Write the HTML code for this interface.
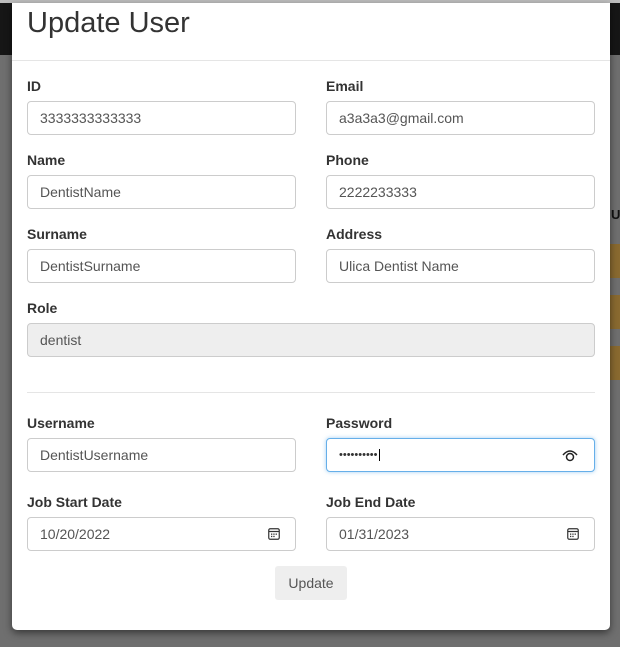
<!DOCTYPE html>
<html><head><style>
body{margin:0;width:620px;height:647px;overflow:hidden;background:#6f6f6f;font-family:"Liberation Sans",sans-serif;position:relative}
.top{position:absolute;left:0;top:0;width:620px;height:3px;background:#bdbdbd}
.dark{position:absolute;left:0;top:3px;width:620px;height:52px;background:#161616}
.modal{position:absolute;left:12px;top:3px;width:598px;height:627px;background:#fff;border-radius:0 0 5px 5px;box-shadow:0 3px 8px rgba(0,0,0,.5)}
h1{position:absolute;left:15px;top:4px;margin:0;font-weight:400;font-size:29px;color:#333}
.hr{position:absolute;left:0;width:598px;height:1px;background:#e5e5e5}
.lbl{position:absolute;font-size:14px;font-weight:bold;color:#333;margin-top:-1px}
.in{position:absolute;box-sizing:border-box;height:34px;border:1px solid #ccc;border-radius:4px;font-size:14px;color:#555;padding:8px 12px;background:#fff}
.btn{position:absolute;left:263px;top:563px;width:72px;height:34px;background:#eee;border-radius:3px;font-size:14px;color:#555;text-align:center;line-height:34px}
.side{position:absolute;background:#8a6a30}
</style></head><body>
<div class="top"></div><div class="dark"></div>
<div class="side" style="left:610px;top:244px;width:10px;height:34px"></div>
<div class="side" style="left:610px;top:295px;width:10px;height:34px"></div>
<div class="side" style="left:610px;top:346px;width:10px;height:34px"></div>
<div style="position:absolute;left:611px;top:207px;font-size:13px;font-weight:bold;color:#111">U</div>
<div class="modal">
<h1>Update User</h1>
<div class="hr" style="top:57px"></div>
<div class="lbl" style="left:15px;top:76px">ID</div>
<div class="lbl" style="left:314px;top:76px">Email</div>
<div class="in" style="left:15px;top:98px;width:269px">3333333333333</div>
<div class="in" style="left:314px;top:98px;width:269px">a3a3a3@gmail.com</div>
<div class="lbl" style="left:15px;top:150px">Name</div>
<div class="lbl" style="left:314px;top:150px">Phone</div>
<div class="in" style="left:15px;top:172px;width:269px">DentistName</div>
<div class="in" style="left:314px;top:172px;width:269px">2222233333</div>
<div class="lbl" style="left:15px;top:224px">Surname</div>
<div class="lbl" style="left:314px;top:224px">Address</div>
<div class="in" style="left:15px;top:246px;width:269px">DentistSurname</div>
<div class="in" style="left:314px;top:246px;width:269px">Ulica Dentist Name</div>
<div class="lbl" style="left:15px;top:298px">Role</div>
<div class="in" style="left:15px;top:320px;width:568px;background:#eee">dentist</div>
<div class="hr" style="top:389px;left:15px;width:568px"></div>
<div class="lbl" style="left:15px;top:413px">Username</div>
<div class="lbl" style="left:314px;top:413px">Password</div>
<div class="in" style="left:15px;top:435px;width:269px">DentistUsername</div>
<div class="in" style="left:314px;top:435px;width:269px;border-color:#66afe9;box-shadow:0 0 4px rgba(102,175,233,.6);color:#333;font-size:11px;padding-top:10px">••••••••••<span style="border-left:1px solid #000;margin-left:1px"></span>
<svg style="position:absolute;right:15px;top:9px" width="18" height="14" viewBox="0 0 18 14"><path d="M2 7 Q9 -1 16 7" fill="none" stroke="#222" stroke-width="1.5"/><circle cx="9" cy="9" r="3.5" fill="none" stroke="#222" stroke-width="1.5"/></svg></div>
<div class="lbl" style="left:15px;top:492px">Job Start Date</div>
<div class="lbl" style="left:314px;top:492px">Job End Date</div>
<div class="in" style="left:15px;top:514px;width:269px">10/20/2022
<svg style="position:absolute;right:15px;top:10px" width="12" height="12" viewBox="0 0 12 12"><rect x="0.75" y="0.75" width="10.5" height="10.5" rx="1.5" fill="none" stroke="#333" stroke-width="1.2"/><line x1="1" y1="3.5" x2="11" y2="3.5" stroke="#333" stroke-width="1.2"/><rect x="3" y="5.5" width="1.3" height="1.3" fill="#333"/><rect x="5.3" y="5.5" width="1.3" height="1.3" fill="#333"/><rect x="7.6" y="5.5" width="1.3" height="1.3" fill="#333"/><rect x="3" y="7.8" width="1.3" height="1.3" fill="#333"/><rect x="5.3" y="7.8" width="1.3" height="1.3" fill="#333"/></svg></div>
<div class="in" style="left:314px;top:514px;width:269px">01/31/2023
<svg style="position:absolute;right:15px;top:10px" width="12" height="12" viewBox="0 0 12 12"><rect x="0.75" y="0.75" width="10.5" height="10.5" rx="1.5" fill="none" stroke="#333" stroke-width="1.2"/><line x1="1" y1="3.5" x2="11" y2="3.5" stroke="#333" stroke-width="1.2"/><rect x="3" y="5.5" width="1.3" height="1.3" fill="#333"/><rect x="5.3" y="5.5" width="1.3" height="1.3" fill="#333"/><rect x="7.6" y="5.5" width="1.3" height="1.3" fill="#333"/><rect x="3" y="7.8" width="1.3" height="1.3" fill="#333"/><rect x="5.3" y="7.8" width="1.3" height="1.3" fill="#333"/></svg></div>
<div class="btn">Update</div>
</div>
</body></html>
